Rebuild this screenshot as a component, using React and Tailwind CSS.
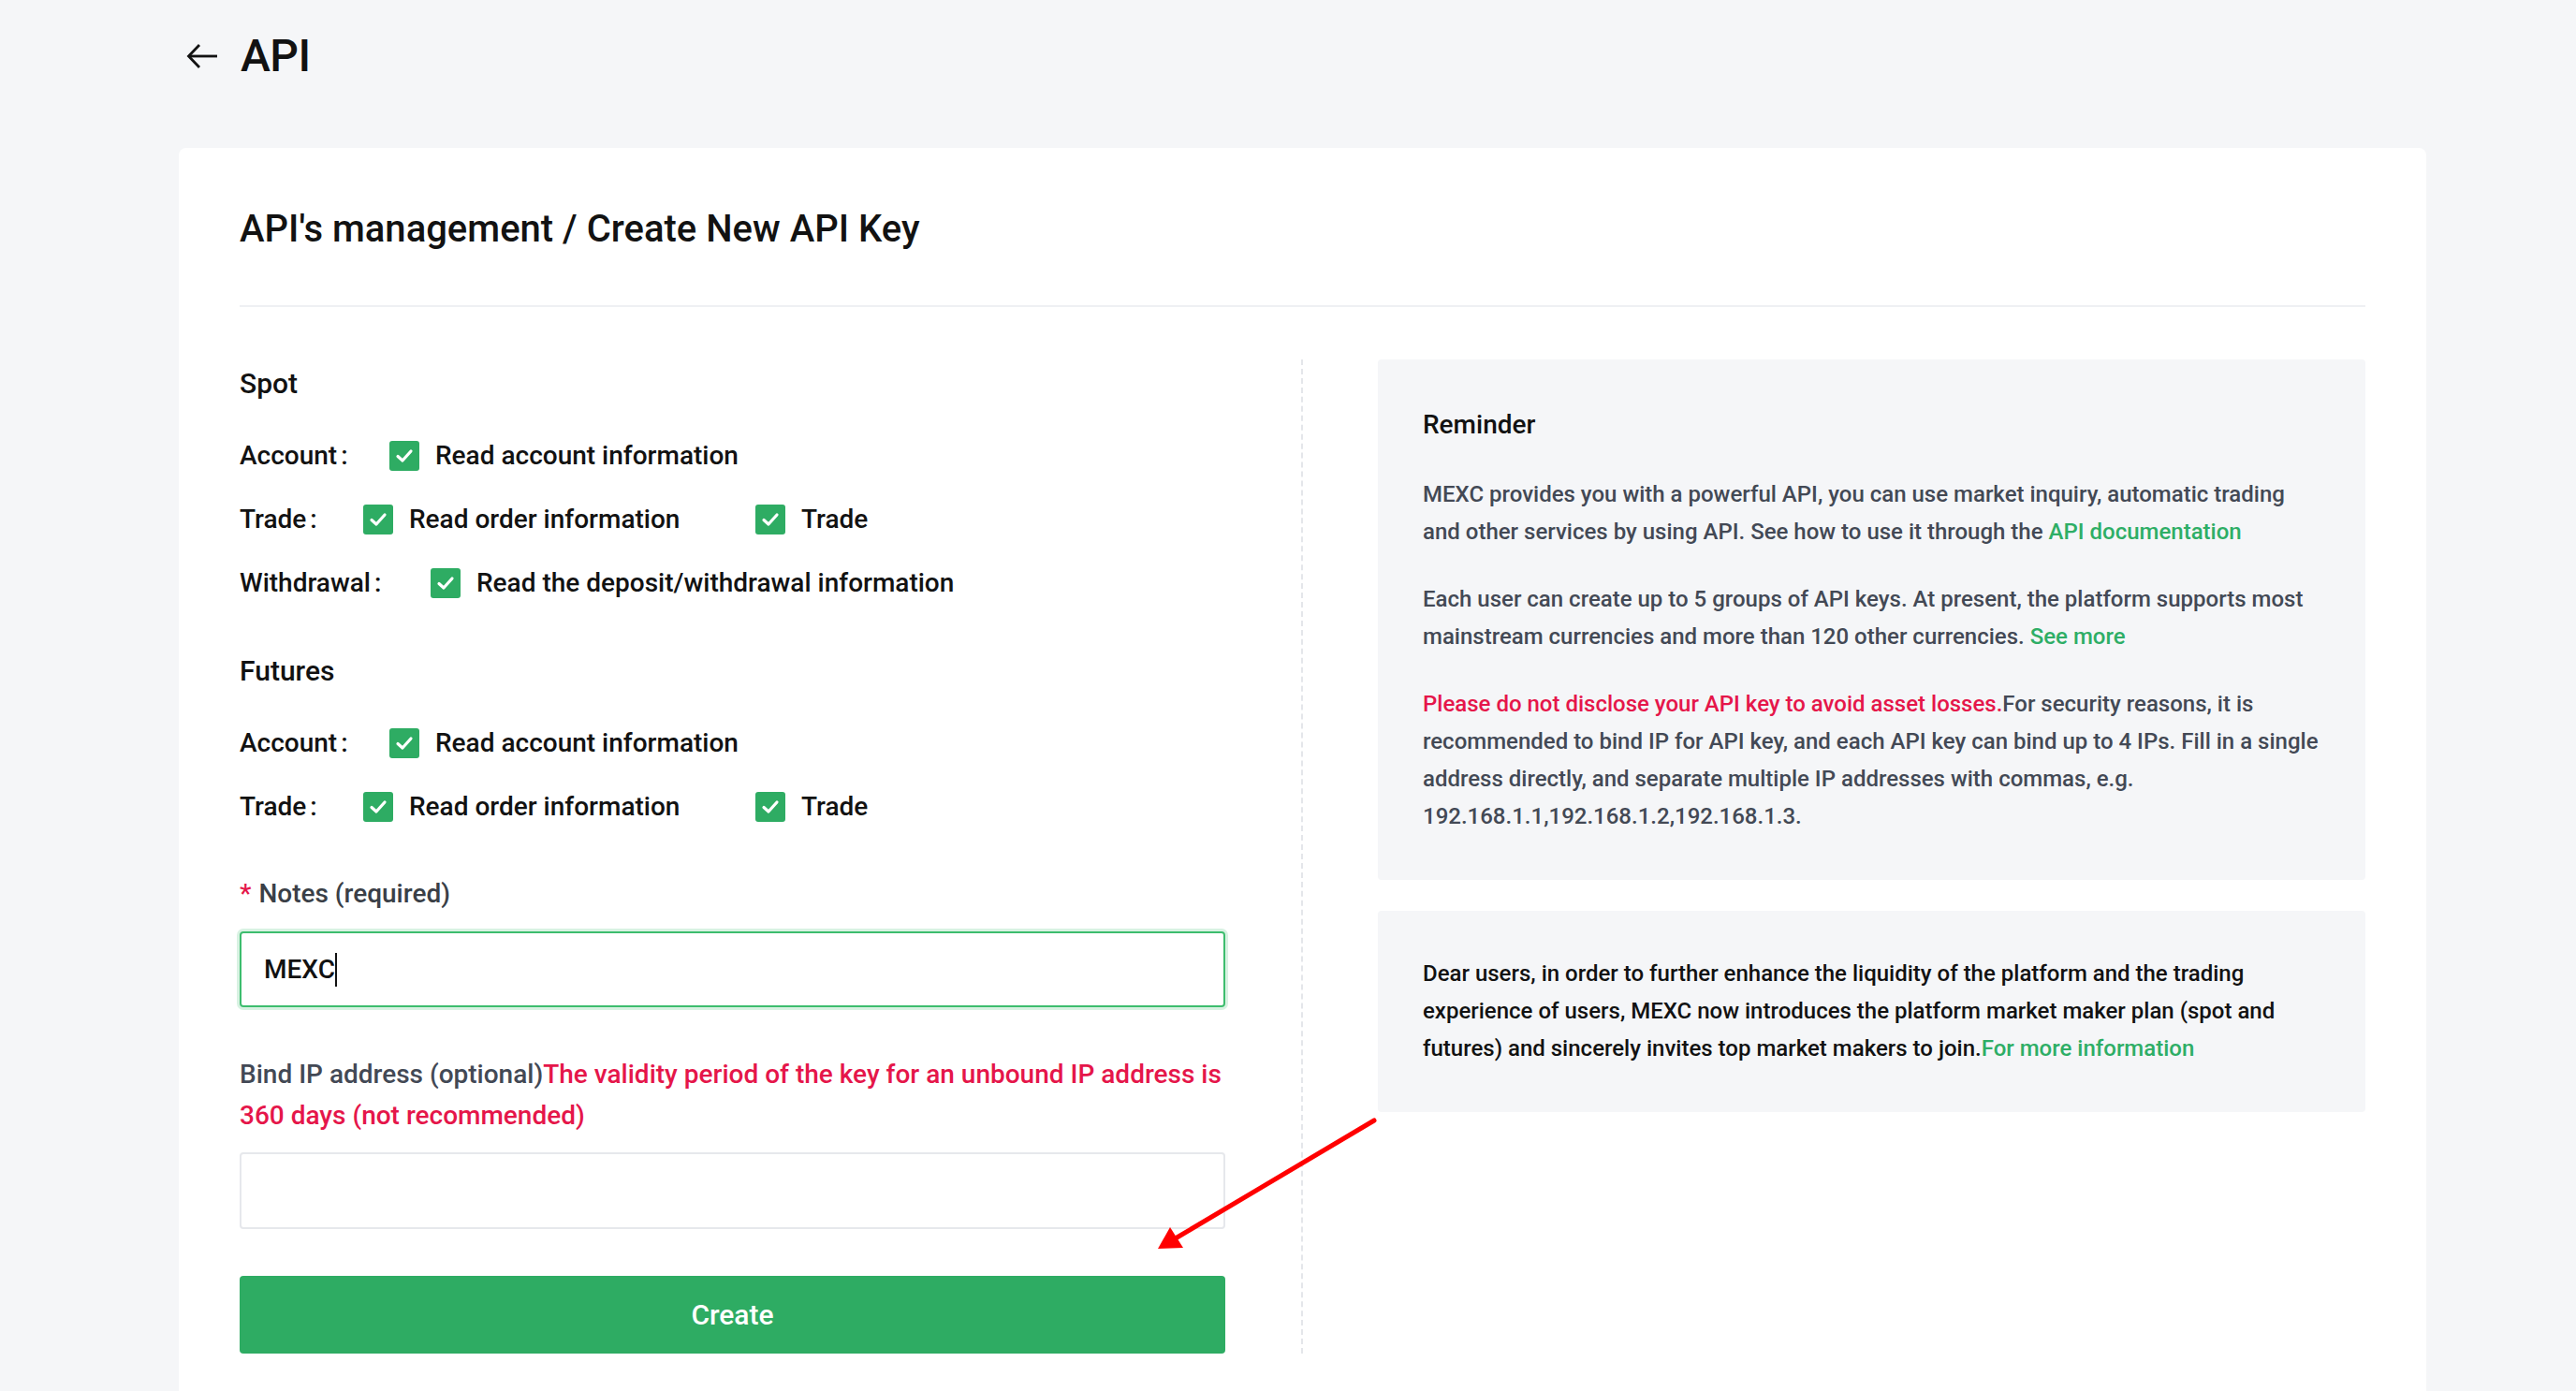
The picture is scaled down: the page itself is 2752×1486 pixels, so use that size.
import React from "react";

function Check() {
  return (
    <span className="flex h-[32px] w-[32px] shrink-0 items-center justify-center rounded-[3px] bg-[#2eac63]">
      <svg width="20" height="16" viewBox="0 0 20 16" fill="none">
        <path d="M3 8.5 L8 13 L17 3" stroke="white" strokeWidth="3.2" strokeLinecap="round" strokeLinejoin="round" />
      </svg>
    </span>
  );
}

function Option({ label, w }) {
  return (
    <div className={`flex items-center gap-[17px] ${w || ""}`}>
      <Check />
      <span>{label}</span>
    </div>
  );
}

function PermRow({ label, labelW, children }) {
  return (
    <div className="flex h-[40px] items-center">
      <span className={`${labelW} shrink-0`}>
        {label}
        <span className="ml-[4px]">:</span>
      </span>
      {children}
    </div>
  );
}

export default function App() {
  return (
    <div className="relative min-h-[1486px] w-full overflow-hidden bg-[#f5f6f8] font-['Roboto','Noto_Sans',sans-serif] text-[#121212]">
      {/* Header */}
      <div className="flex h-[120px] items-center gap-[24px] pl-[199px]">
        <svg width="34" height="28" viewBox="0 0 34 28" fill="none">
          <path d="M33 14H3" stroke="#121212" strokeWidth="2.8" />
          <path d="M14 2 L2.5 14 L14 26" stroke="#121212" strokeWidth="2.8" fill="none" />
        </svg>
        <h1 className="text-[48px] font-medium leading-none tracking-[-0.5px]">API</h1>
      </div>

      {/* Card */}
      <div className="ml-[191px] mt-[38px] w-[2401px] rounded-[8px] bg-white px-[65px] pb-[80px] pt-[57px]">
        <h2 className="h-[60px] text-[40px] font-medium leading-[60px]">API's management / Create New API Key</h2>
        <div className="mt-[51px] h-[2px] bg-[#eff0f3]" />

        <div className="mt-[56px] flex">
          {/* Left column */}
          <div className="w-[1053px] shrink-0 text-[28px] font-medium">
            <div className="mt-[6px] h-[40px] text-[30px] leading-[40px]">Spot</div>
            <div className="mt-[37px] flex flex-col gap-[28px]">
              <PermRow label="Account" labelW="w-[160px]">
                <Option label="Read account information" />
              </PermRow>
              <PermRow label="Trade" labelW="w-[132px]">
                <Option label="Read order information" w="w-[419px]" />
                <Option label="Trade" />
              </PermRow>
              <PermRow label="Withdrawal" labelW="w-[204px]">
                <Option label="Read the deposit/withdrawal information" />
              </PermRow>
            </div>

            <div className="mt-[54px] h-[40px] text-[30px] leading-[40px]">Futures</div>
            <div className="mt-[37px] flex flex-col gap-[28px]">
              <PermRow label="Account" labelW="w-[160px]">
                <Option label="Read account information" />
              </PermRow>
              <PermRow label="Trade" labelW="w-[132px]">
                <Option label="Read order information" w="w-[419px]" />
                <Option label="Trade" />
              </PermRow>
            </div>

            <div className="mt-[53px] h-[40px] text-[28px] leading-[40px] text-[#3a3f47]">
              <span className="mr-[8px] text-[#e5164a]">*</span>Notes (required)
            </div>
            <div className="mt-[20px] flex h-[81px] items-center rounded-[4px] border-2 border-[#3dbd6e] px-[24px] text-[28px] text-[#121212] shadow-[0_0_0_3px_rgba(61,189,110,0.2)]">
              <span>MEXC</span>
              <span className="h-[36px] w-[2px] bg-[#121212]" />
            </div>

            <div className="mt-[50px] text-[28px] leading-[44px] text-[#434955]">
              Bind IP address (optional)
              <span className="text-[#e5164a]">The validity period of the key for an unbound IP address is 360 days (not recommended)</span>
            </div>
            <div className="mt-[17px] h-[82px] rounded-[4px] border-2 border-[#e6e8ec] bg-white" />

            <button className="mt-[50px] flex h-[83px] w-full items-center justify-center rounded-[4px] bg-[#2eac63] text-[30px] font-medium text-white">
              Create
            </button>
          </div>

          {/* Divider */}
          <div className="ml-[81px] mr-[80px] w-0 shrink-0 border-l-2 border-dashed border-[#e4e6ea]" />

          {/* Right column */}
          <div className="w-[1055px] shrink-0">
            <div className="rounded-[4px] bg-[#f5f6f8] px-[48px] pb-[48px] pt-[50px]">
              <div className="h-[40px] text-[28px] font-medium leading-[40px] text-[#121212]">Reminder</div>
              <div className="mt-[34px] flex flex-col gap-[32px] text-[24px] font-medium leading-[40px] text-[#434955]">
                <p>
                  MEXC provides you with a powerful API, you can use market inquiry, automatic trading and other services by using API. See how to use it through the{" "}
                  <span className="text-[#2eae66]">API documentation</span>
                </p>
                <p>
                  Each user can create up to 5 groups of API keys. At present, the platform supports most mainstream currencies and more than 120 other currencies.{" "}
                  <span className="text-[#2eae66]">See more</span>
                </p>
                <p>
                  <span className="text-[#e5164a]">Please do not disclose your API key to avoid asset losses.</span>
                  For security reasons, it is recommended to bind IP for API key, and each API key can bind up to 4 IPs. Fill in a single address directly, and separate multiple IP addresses with commas, e.g. 192.168.1.1,192.168.1.2,192.168.1.3.
                </p>
              </div>
            </div>
            <div className="mt-[33px] rounded-[4px] bg-[#f5f6f8] px-[48px] pb-[48px] pt-[47px] text-[24px] font-medium leading-[40px] text-[#121212]">
              Dear users, in order to further enhance the liquidity of the platform and the trading experience of users, MEXC now introduces the platform market maker plan (spot and futures) and sincerely invites top market makers to join.
              <span className="text-[#2eae66]">For more information</span>
            </div>
          </div>
        </div>
      </div>

      {/* Red annotation arrow */}
      <svg className="pointer-events-none absolute left-[1230px] top-[1190px]" width="245" height="150" viewBox="0 0 245 150" fill="none">
        <path d="M238 7 L24 134" stroke="#ff0000" strokeWidth="5" strokeLinecap="round" />
        <path d="M7 144 L20 121 L34 143 Z" fill="#ff0000" />
      </svg>
    </div>
  );
}
